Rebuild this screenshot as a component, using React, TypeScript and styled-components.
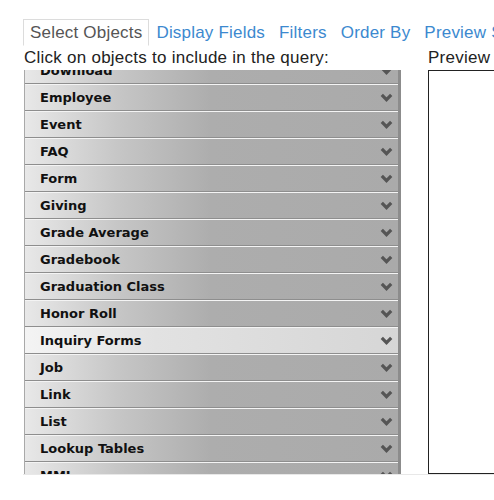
import { useEffect, useRef } from 'react'
import styled, { createGlobalStyle } from 'styled-components'

const objects = [
  'Album', 'Announcement', 'Athletics', 'Blog', 'Calendar', 'Course', 'Directory',
  'Download', 'Employee', 'Event', 'FAQ', 'Form', 'Giving', 'Grade Average', 'Gradebook',
  'Graduation Class', 'Honor Roll', 'Inquiry Forms', 'Job', 'Link', 'List', 'Lookup Tables',
  'MMI', 'News', 'Page', 'Photo',
]

const tabs = ['Select Objects', 'Display Fields', 'Filters', 'Order By', 'Preview SQL']

function Chevron() {
  return (
    <svg width="13" height="9" viewBox="0 0 13 9">
      <polyline points="1.8,1.8 6.5,6.6 11.2,1.8" fill="none" stroke="#555" strokeWidth="3.2" strokeLinejoin="miter" />
    </svg>
  )
}

export default function App() {
  const listRef = useRef<HTMLDivElement>(null)

  useEffect(() => {
    // list opens scrolled down to the middle of "Download"
    if (listRef.current) listRef.current.scrollTop = 7 * 27 + 13
  }, [])

  return (
    <>
      <GlobalStyle />
      <Page>
        <TabBar>
          {tabs.map((t, i) => (
            <Tab key={t} active={i === 0}>{t}</Tab>
          ))}
        </TabBar>
        <Panel>
          <LeftColumn>
            <Caption>Click on objects to include in the query:</Caption>
            <ObjectList ref={listRef}>
              {objects.map(o => (
                <ObjectRow key={o} hovered={o === 'Inquiry Forms'}>
                  <span>{o}</span>
                  <Chevron />
                </ObjectRow>
              ))}
            </ObjectList>
          </LeftColumn>
          <RightColumn>
            <Caption>Preview</Caption>
            <PreviewBox />
          </RightColumn>
        </Panel>
      </Page>
    </>
  )
}

const GlobalStyle = createGlobalStyle`
  html, body {
    margin: 0;
    padding: 0;
    overflow: hidden;
    background: #fff;
    font-family: "Liberation Sans", Arial, sans-serif;
  }
`

const Page = styled.div`
  padding: 19px 0 0 23px;
  width: 800px;
`

const TabBar = styled.div`
  display: flex;
  white-space: nowrap;
  border-bottom: 1px solid #e2e2e2;
`

const Tab = styled.div<{ active?: boolean }>`
  padding: 3px 6px 2px;
  line-height: 20px;
  font-size: 17px;
  letter-spacing: 0.2px;
  border: 1px solid ${p => (p.active ? '#dcdcdc' : 'transparent')};
  border-bottom-color: ${p => (p.active ? '#fff' : 'transparent')};
  margin-bottom: -1px;
  color: ${p => (p.active ? '#555' : '#3c89cf')};
  background: #fff;
  cursor: pointer;
`

const Panel = styled.div`
  display: flex;
  gap: 27px;
  padding: 2px 0 0 1px;
  border-bottom: 1px solid #e8e8e8;
`

const LeftColumn = styled.div`
  display: flex;
  flex-direction: column;
  width: 377px;
`

const RightColumn = styled.div`
  display: flex;
  flex-direction: column;
  width: 300px;
`

const Caption = styled.div`
  font-size: 17px;
  letter-spacing: 0.25px;
  line-height: 20px;
  color: #222;
  white-space: nowrap;
  margin-bottom: 2px;
`

const ObjectList = styled.div`
  height: 404px;
  overflow: hidden;
  border-left: 1px solid #a9a9a9;
  border-right: 3px solid #8c8c8c;
  background: #aaa;
`

const ObjectRow = styled.div<{ hovered?: boolean }>`
  display: flex;
  align-items: center;
  justify-content: space-between;
  height: 25px;
  padding: 0 5px 0 15px;
  border-top: 1px solid #f4f4f4;
  border-bottom: 1px solid #8e8e8e;
  background: ${p =>
    p.hovered
      ? 'linear-gradient(to right, #f4f4f4 0%, #e2e2e2 35%, #d6d6d6 100%)'
      : 'linear-gradient(to right, #e8e8e8 0%, #c6c6c6 25%, #adadad 50%, #aaaaaa 100%)'};
  font-family: "DejaVu Sans", Verdana, sans-serif;
  font-weight: bold;
  font-size: 13px;
  color: #111;
  cursor: pointer;

  svg {
    flex-shrink: 0;
  }
`

const PreviewBox = styled.div`
  height: 402px;
  border: 1px solid #222;
`
